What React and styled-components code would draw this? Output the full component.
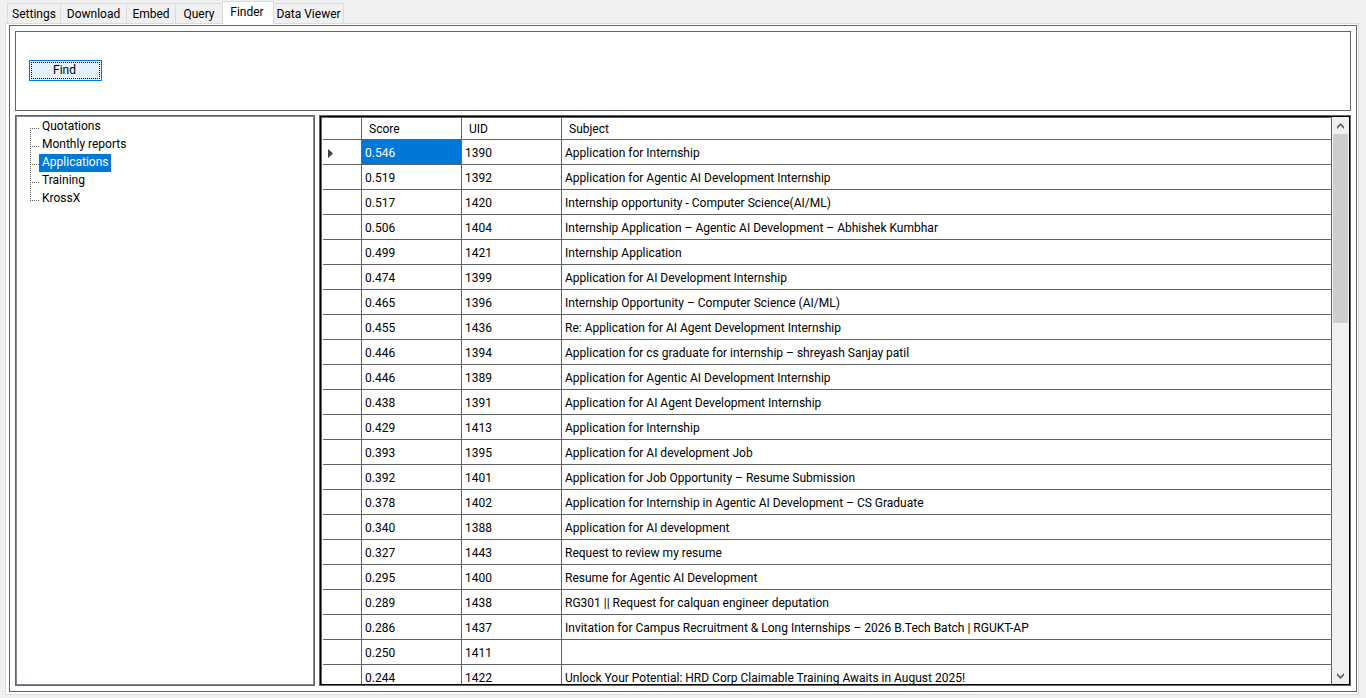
import React, { useState } from "react";
import styled, { createGlobalStyle } from "styled-components";

const LINE = "#646464";
const ACCENT = "#0078d7";

const GlobalStyle = createGlobalStyle`
  * { box-sizing: border-box; }
  body {
    margin: 0;
    background: #f0f0f0;
    color: #000;
    font: 12px/16px "Segoe UI", Roboto, "Open Sans", sans-serif;
  }
  button { font: inherit; color: inherit; margin: 0; }
`;

const Window = styled.div`
  display: flex;
  flex-direction: column;
  height: 100vh;
  padding: 1px 7px 3px 5px;
`;

const TabStrip = styled.div`
  display: flex;
  align-items: flex-end;
  height: 22px;
  padding-left: 2px;
`;

const Tab = styled.button`
  width: ${(p) => p.$width}px;
  height: ${(p) => (p.$active ? 23 : 20)}px;
  margin-left: ${(p) => (p.$first ? 0 : -1)}px;
  margin-bottom: ${(p) => (p.$active ? -1 : 0)}px;
  padding: ${(p) => (p.$active ? "0 2px 2px 0" : "1px 0 0")};
  border: 1px solid #dcdcdc;
  border-bottom: 0;
  background: ${(p) => (p.$active ? "#fff" : "#f0f0f0")};
  z-index: ${(p) => (p.$active ? 1 : 0)};
  line-height: 16px;
  white-space: nowrap;
`;

const TabPage = styled.main`
  display: flex;
  flex: 1;
  min-height: 0;
  padding: 1px 1px 2px 3px;
  border: 1px solid #dcdcdc;
  background: #fff;
`;

const PageFrame = styled.div`
  display: flex;
  flex-direction: column;
  flex: 1;
  min-width: 0;
  gap: 4px;
  padding: 5px;
  border: 1px solid ${LINE};
`;

const ActionPanel = styled.section`
  display: flex;
  align-items: center;
  height: 80px;
  padding: 0 13px 2px;
  border: 1px solid ${LINE};
`;

const FindButton = styled.button`
  width: 73px;
  height: 21px;
  padding: 0 2px 0 0;
  border: 1px solid ${ACCENT};
  background: #e5f1fb;
  line-height: 16px;
  outline: 1px dotted #000;
  outline-offset: -3px;
`;

const Split = styled.div`
  display: flex;
  flex: 1;
  min-height: 0;
  gap: 4px;
`;

const Tree = styled.ul`
  flex: none;
  width: 300px;
  margin: 0;
  padding: 2px 14px;
  border: 1px solid ${LINE};
  box-shadow: inset 0 0 0 1px #828790;
  list-style: none;
`;

const TreeRow = styled.li`
  display: flex;
  height: 18px;
`;

const TreeLabel = styled.button`
  height: 18px;
  padding: 0 3px 2px;
  border: 0;
  background: ${(p) => (p.$selected ? ACCENT : "transparent")};
  color: ${(p) => (p.$selected ? "#fff" : "#000")};
  line-height: 16px;
`;

const Grid = styled.section`
  display: flex;
  flex: 1;
  min-width: 0;
  border: 1px solid ${LINE};
  outline: 1px solid #000;
  outline-offset: -2px;
  padding: 1px;
`;

const GridView = styled.div`
  flex: 1;
  min-width: 0;
  overflow: hidden;
  padding-left: 1px;
  border-top: 1px solid ${LINE};
  border-left: 1px solid ${LINE};
`;

const Table = styled.table`
  width: 100%;
  table-layout: fixed;
  border-collapse: separate;
  border-spacing: 0;
`;

const HeadCell = styled.th`
  width: ${(p) => (p.$width ? `${p.$width}px` : "auto")};
  height: 22px;
  padding: 0 7px;
  border-right: 1px solid ${LINE};
  border-bottom: 1px solid ${LINE};
  font-weight: normal;
  text-align: left;
`;

const Cell = styled.td`
  height: 25px;
  padding: 2px 3px 0;
  border-right: 1px solid ${LINE};
  border-bottom: 1px solid ${LINE};
  background: ${(p) => (p.$selected ? ACCENT : "#fff")};
  color: ${(p) => (p.$selected ? "#fff" : "#000")};
  white-space: nowrap;
`;

const MarkerCell = styled(Cell)`
  padding: 2px 4px 0;
  line-height: 0;
`;

const ScrollBar = styled.div`
  display: flex;
  flex-direction: column;
  flex: none;
  width: 17px;
  padding: 0 1px;
  background: #f0f0f0;
`;

const ScrollButton = styled.button`
  display: flex;
  align-items: center;
  justify-content: center;
  height: 17px;
  padding: 0;
  border: 0;
  background: #f0f0f0;
`;

const Thumb = styled.div`
  flex: 55;
  background: #cdcdcd;
`;

const Track = styled.div`
  flex: 100;
`;

const tabs = [
  ["Settings", 54],
  ["Download", 67],
  ["Embed", 50],
  ["Query", 48],
  ["Finder", 52],
  ["Data Viewer", 71],
];

const folders = ["Quotations", "Monthly reports", "Applications", "Training", "KrossX"];

const rows = [
  ["0.546", "1390", "Application for Internship"],
  ["0.519", "1392", "Application for Agentic AI Development Internship"],
  ["0.517", "1420", "Internship opportunity - Computer Science(AI/ML)"],
  ["0.506", "1404", "Internship Application – Agentic AI Development – Abhishek Kumbhar"],
  ["0.499", "1421", "Internship Application"],
  ["0.474", "1399", "Application for AI Development Internship"],
  ["0.465", "1396", "Internship Opportunity – Computer Science (AI/ML)"],
  ["0.455", "1436", "Re: Application for AI Agent Development Internship"],
  ["0.446", "1394", "Application for cs graduate for internship – shreyash Sanjay patil"],
  ["0.446", "1389", "Application for Agentic AI Development Internship"],
  ["0.438", "1391", "Application for AI Agent Development Internship"],
  ["0.429", "1413", "Application for Internship"],
  ["0.393", "1395", "Application for AI development Job"],
  ["0.392", "1401", "Application for Job Opportunity – Resume Submission"],
  ["0.378", "1402", "Application for Internship in Agentic AI Development – CS Graduate"],
  ["0.340", "1388", "Application for AI development"],
  ["0.327", "1443", "Request to review my resume"],
  ["0.295", "1400", "Resume for Agentic AI Development"],
  ["0.289", "1438", "RG301 || Request for calquan engineer deputation"],
  ["0.286", "1437", "Invitation for Campus Recruitment & Long Internships – 2026 B.Tech Batch | RGUKT-AP"],
  ["0.250", "1411", ""],
  ["0.244", "1422", "Unlock Your Potential: HRD Corp Claimable Training Awaits in August 2025!"],
];

function Branch({ first, last }) {
  return (
    <svg width="9" height="18" aria-hidden="true" shapeRendering="crispEdges" stroke="#606060" strokeDasharray="1 1">
      <path d={`M0.5 ${first ? 10 : 0}V${last ? 11 : 18}`} />
      <path d="M0 10.5H9" />
    </svg>
  );
}

function Chevron({ down }) {
  return (
    <svg width="7" height="6" viewBox="0 0 7 6" aria-hidden="true" fill="#606060">
      <path d={down ? "M0 0L3.500 3.500L7 0V2.500L3.500 6L0 2.500Z" : "M0 6L3.500 2.500L7 6V3.500L3.500 0L0 3.500Z"} />
    </svg>
  );
}

export default function App() {
  const [tab, setTab] = useState("Finder");
  const [folder, setFolder] = useState("Applications");

  return (
    <Window>
      <GlobalStyle />
      <TabStrip role="tablist">
        {tabs.map(([name, width], i) => (
          <Tab
            key={name}
            type="button"
            role="tab"
            aria-selected={name === tab}
            $active={name === tab}
            $first={i === 0}
            $width={width}
            onClick={() => setTab(name)}
          >
            {name}
          </Tab>
        ))}
      </TabStrip>
      <TabPage>
        <PageFrame>
          <ActionPanel>
            <FindButton type="button">Find</FindButton>
          </ActionPanel>
          <Split>
            <Tree>
              {folders.map((name, i) => (
                <TreeRow key={name}>
                  <Branch first={i === 0} last={i === folders.length - 1} />
                  <TreeLabel type="button" $selected={name === folder} onClick={() => setFolder(name)}>
                    {name}
                  </TreeLabel>
                </TreeRow>
              ))}
            </Tree>
            <Grid>
              <GridView>
                <Table>
                  <thead>
                    <tr>
                      <HeadCell $width={39} aria-label="Current row" />
                      <HeadCell $width={100} scope="col">Score</HeadCell>
                      <HeadCell $width={100} scope="col">UID</HeadCell>
                      <HeadCell scope="col">Subject</HeadCell>
                    </tr>
                  </thead>
                  <tbody>
                    {rows.map(([score, uid, subject], i) => (
                      <tr key={uid}>
                        <MarkerCell>
                          {i === 0 && (
                            <svg width="6" height="9" aria-label="Current row" role="img">
                              <path d="M1 0L6 4.500L1 9Z" fill="#404040" />
                            </svg>
                          )}
                        </MarkerCell>
                        <Cell $selected={i === 0}>{score}</Cell>
                        <Cell>{uid}</Cell>
                        <Cell>{subject}</Cell>
                      </tr>
                    ))}
                  </tbody>
                </Table>
              </GridView>
              <ScrollBar>
                <ScrollButton type="button" aria-label="Scroll up"><Chevron /></ScrollButton>
                <Thumb />
                <Track />
                <ScrollButton type="button" aria-label="Scroll down"><Chevron down /></ScrollButton>
              </ScrollBar>
            </Grid>
          </Split>
        </PageFrame>
      </TabPage>
    </Window>
  );
}
